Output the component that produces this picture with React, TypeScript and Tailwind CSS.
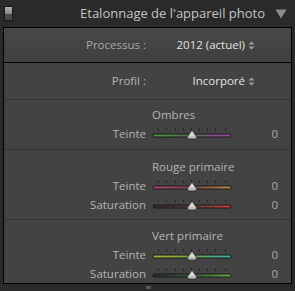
import React from "react";

const font = { fontFamily: '"Open Sans", "Noto Sans", sans-serif' };

function Slider({ id, from, mid, to }: { id: string; from: string; mid: string; to: string }) {
  const ticks = [6, 14, 23, 31, 39, 47, 55, 63, 73];
  return (
    <svg width="82" height="14" viewBox="0 0 82 14" className="block">
      <defs>
        <linearGradient id={id} x1="0" x2="1" y1="0" y2="0">
          <stop offset="0" stopColor={from} />
          <stop offset="0.5" stopColor={mid} />
          <stop offset="1" stopColor={to} />
        </linearGradient>
      </defs>
      {ticks.map((t) => (
        <rect key={t} x={t} y={1} width={1} height={3} fill="#252525" />
      ))}
      <rect x="0.5" y="6.5" width="79" height="4" rx="2" fill="#1a1a1a" />
      <rect x="1.5" y="7.5" width="77" height="2" rx="1" fill={`url(#${id})`} />
      <path d="M40 3 L44.5 9.5 Q45 12 42.5 12 L37.5 12 Q35 12 35.5 9.5 Z" fill="#bdbdbd" stroke="#2a2a2a" strokeWidth="0.8" />
      <path d="M40 4.5 L43 9 L37 9 Z" fill="#d6d6d6" />
    </svg>
  );
}

function Row({ label, id, from, mid, to }: { label: string; id: string; from: string; mid: string; to: string }) {
  return (
    <div className="flex h-[19px] items-center">
      <div className="w-[142px] text-right text-[11.5px] text-[#b4b4b4]">{label}</div>
      <div className="ml-[6px] w-[82px]">
        <Slider id={id} from={from} mid={mid} to={to} />
      </div>
      <div className="flex-1 pr-[13px] text-right text-[11.5px] text-[#a8a8a8]">0</div>
    </div>
  );
}

function Heading({ children }: { children: React.ReactNode }) {
  return (
    <div className="flex h-[18px] items-center">
      <div className="w-[148px]" />
      <div className="whitespace-nowrap text-[11.5px] text-[#b4b4b4]">{children}</div>
    </div>
  );
}

function Updown() {
  return (
    <svg width="7" height="9" viewBox="0 0 7 9" className="ml-[3px] inline-block">
      <path d="M3.5 0.5 L6.5 3.5 L0.5 3.5 Z" fill="#a0a0a0" />
      <path d="M3.5 8.5 L6.5 5.5 L0.5 5.5 Z" fill="#a0a0a0" />
    </svg>
  );
}

export default function App() {
  return (
    <div className="h-[291px] w-[295px] overflow-hidden bg-[#2a2a2a]" style={font}>
      <div className="flex h-[27px] items-center">
        <div className="ml-[4px] flex h-[15px] w-[9px] flex-col border border-[#1a1a1a]">
          <div className="h-1/2 bg-gradient-to-b from-[#b0b0b0] to-[#8a8a8a]" />
          <div className="h-1/2 bg-[#4a4a4a]" />
        </div>
        <div className="flex-1 pr-[10px] text-right text-[13px] text-[#c4c4c4]">Etalonnage de l'appareil photo</div>
        <svg width="12" height="10" viewBox="0 0 12 10" className="mr-[8px]">
          <path d="M0.5 0.5 L11.5 0.5 L6 9.5 Z" fill="#8c8c8c" />
        </svg>
      </div>
      <div className="ml-[3px] mr-[3px] border border-black bg-[#434343]">
        <div className="flex h-[34px] items-center bg-gradient-to-b from-[#484848] to-[#3f3f3f]">
          <div className="w-[142px] text-right text-[11.5px] text-[#a8a8a8]">Processus :</div>
          <div className="flex flex-1 items-center justify-end pr-[36px] text-[11.5px] text-[#e2e2e2]">
            2012 (actuel)
            <Updown />
          </div>
        </div>
        <div className="h-px bg-black" />
        <div className="flex h-[36px] items-center">
          <div className="w-[142px] text-right text-[11.5px] text-[#b4b4b4]">Profil :</div>
          <div className="flex flex-1 items-center justify-end pr-[36px] text-[11.5px] text-[#e2e2e2]">
            Incorporé
            <Updown />
          </div>
        </div>
        <div className="h-px bg-[#363636]" />
        <div className="pb-[6px] pt-[6px]">
          <Heading>Ombres</Heading>
          <Row label="Teinte" id="g1" from="#3f9a3a" mid="#5a6a5a" to="#a040a8" />
        </div>
        <div className="h-px bg-[#363636]" />
        <div className="pb-[5px] pt-[8px]">
          <Heading>Rouge primaire</Heading>
          <Row label="Teinte" id="g2" from="#b8407a" mid="#7a4a4a" to="#c08a40" />
          <Row label="Saturation" id="g3" from="#2a2a2a" mid="#5a3a3a" to="#c83c3c" />
        </div>
        <div className="h-px bg-[#363636]" />
        <div className="pb-0 pt-[7px]">
          <Heading>Vert primaire</Heading>
          <Row label="Teinte" id="g4" from="#a8b030" mid="#70a040" to="#30b0a8" />
          <Row label="Saturation" id="g5" from="#2a2a2a" mid="#3a5a3a" to="#60b040" />
        </div>
      </div>
      <div className="ml-[146px] mt-[2px] h-[3px] w-[5px] bg-[#5a5a5a]" />
    </div>
  );
}
